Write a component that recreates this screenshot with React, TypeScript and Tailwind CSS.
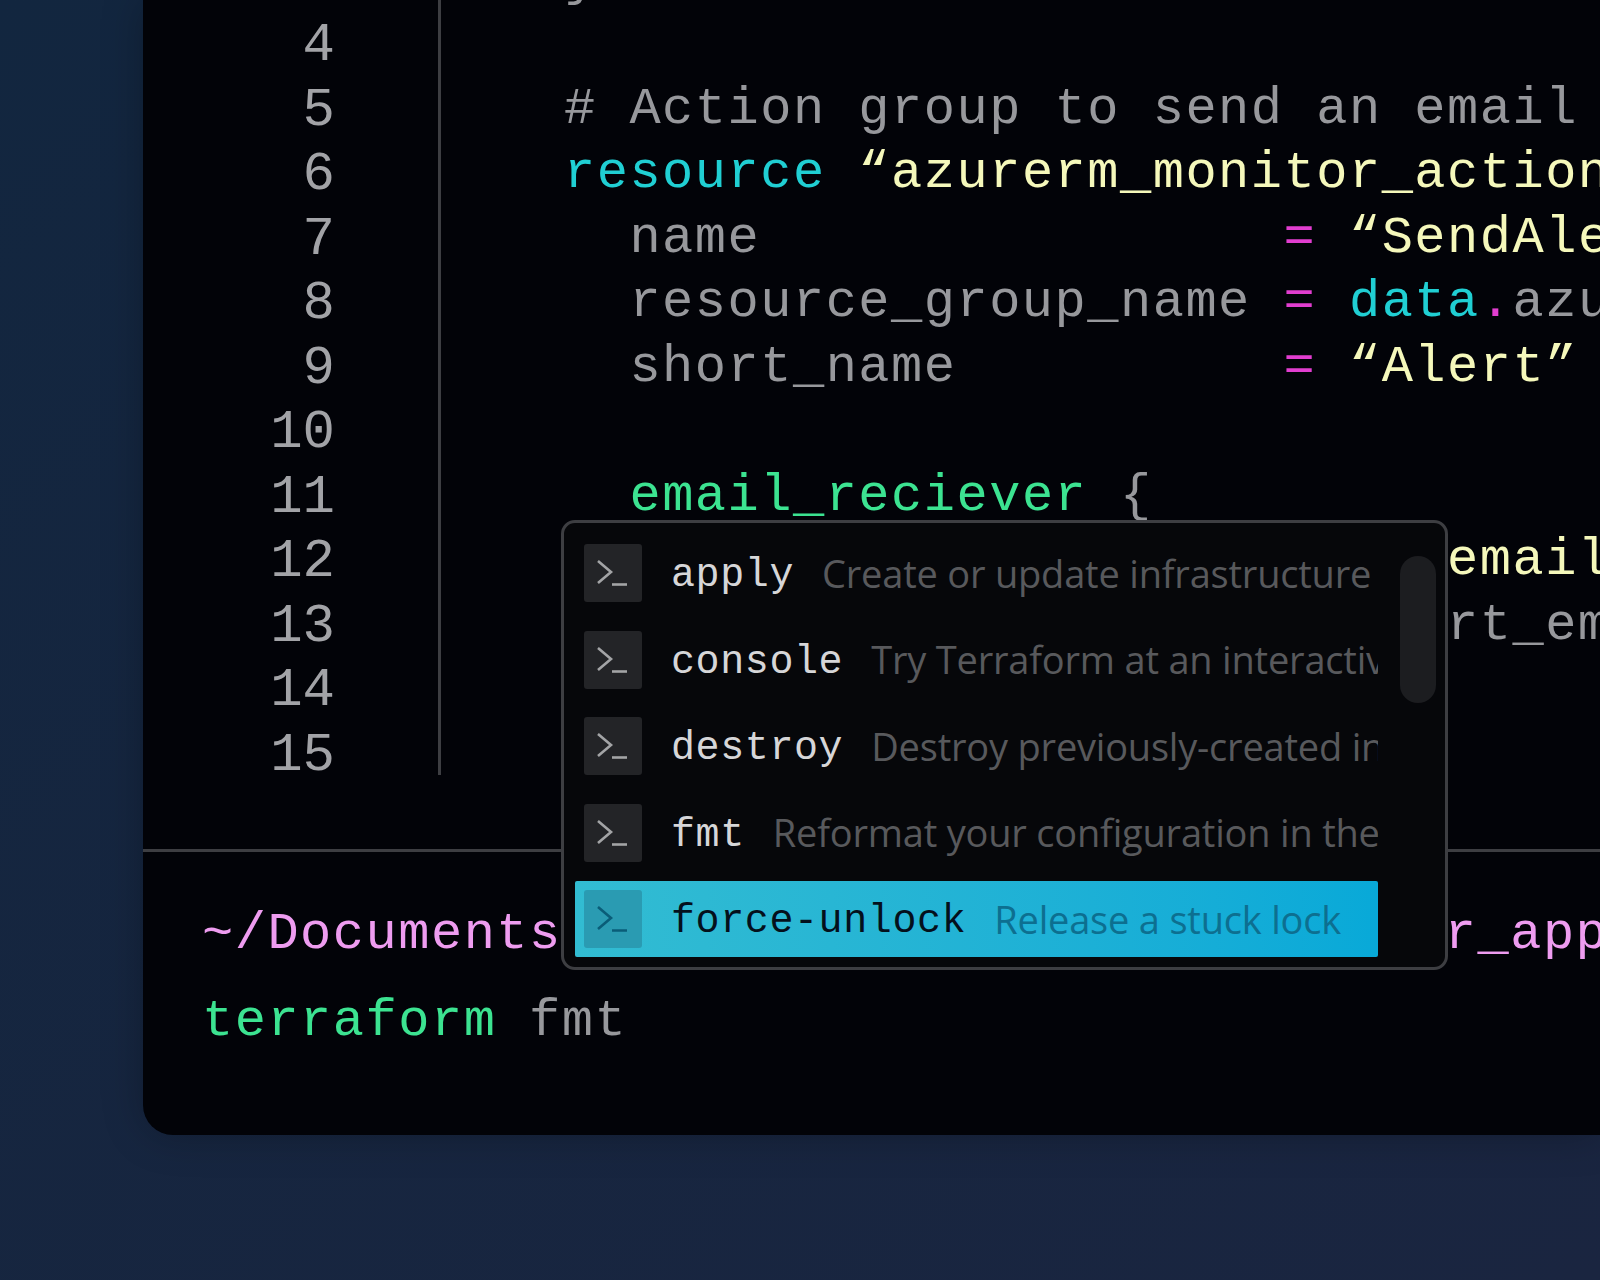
const lineNumbers = [3, 4, 5, 6, 7, 8, 9, 10, 11, 12, 13, 14, 15]

const commands = [
  { name: "apply", desc: "Create or update infrastructure" },
  { name: "console", desc: "Try Terraform at an interactive console" },
  { name: "destroy", desc: "Destroy previously-created infrastructure" },
  { name: "fmt", desc: "Reformat your configuration in the standard style" },
  { name: "force-unlock", desc: "Release a stuck lock", active: true },
]

function PromptIcon() {
  return (
    <svg viewBox="0 0 58 58" className="h-[58px] w-[58px]" fill="none" stroke="currentColor">
      <path d="M14 17 L27 28 L14 39" strokeWidth="2.6" />
      <path d="M28 40.5 H43" strokeWidth="2.6" />
    </svg>
  )
}

function CommandRow({ name, desc, active }: { name: string; desc: string; active?: boolean }) {
  return (
    <div
      className={
        active
          ? "flex items-center h-[76px] w-[803px] shrink-0 pl-[9px] overflow-hidden rounded-[2px] bg-gradient-to-r from-[#32bcd2] to-[#08a9d8]"
          : "flex items-center h-[76px] w-[803px] shrink-0 pl-[9px] overflow-hidden"
      }
    >
      <div
        className={
          active
            ? "flex shrink-0 items-center justify-center w-[58px] h-[58px] rounded-[3px] bg-[#2a9bb2] text-[#0a5d78]"
            : "flex shrink-0 items-center justify-center w-[58px] h-[58px] rounded-[3px] bg-[#232427] text-[#a3a4a6]"
        }
      >
        <PromptIcon />
      </div>
      <span
        className={
          active
            ? "ml-[29px] pt-[6px] font-['Liberation_Mono',monospace] text-[40px] tracking-[0.6px] text-[#04101c] whitespace-pre"
            : "ml-[29px] pt-[6px] font-['Liberation_Mono',monospace] text-[40px] tracking-[0.6px] text-[#d6d6d8] whitespace-pre"
        }
      >
        {name}
      </span>
      <span
        className={
          active
            ? "ml-[28px] font-['Open_Sans',sans-serif] text-[38px] tracking-[-0.2px] text-[#0d6f90] whitespace-pre"
            : "ml-[28px] font-['Open_Sans',sans-serif] text-[38px] tracking-[-0.2px] text-[#58595c] whitespace-pre"
        }
      >
        {desc}
      </span>
    </div>
  )
}

export default function App() {
  return (
    <div className="h-[1280px] w-[1600px] overflow-hidden bg-gradient-to-br from-[#12263f] to-[#1a2540] pl-[143px] font-['Liberation_Mono',monospace]">
      <div className="relative h-[1135px] w-[1457px] overflow-hidden rounded-bl-[30px] bg-[#020308] shadow-[0_0_40px_rgba(0,0,0,0.25)]">
        {/* Editor */}
        <div className="flex h-[849px] overflow-hidden">
          <div className="flex h-[775px] w-[298px] shrink-0 flex-col justify-end border-r-[3px] border-[#3d3e42] pr-[103px]">
            <div className="-mb-[13px]">
              {lineNumbers.map((n) => (
                <div key={n} className="h-[64.5px] text-right text-[54px] leading-[64.5px] text-[#a2a3a7]">
                  {n}
                </div>
              ))}
            </div>
          </div>

          <div className="flex flex-1 flex-col justify-end pb-[62px] pl-[123px] text-[52px] leading-[64.5px] tracking-[1.5px] text-[#97989c] whitespace-pre">
            <div className="h-[64.5px] shrink-0">{"}"}</div>
            <div className="h-[64.5px] shrink-0" />
            <div className="h-[64.5px] shrink-0"># Action group to send an email</div>
            <div className="h-[64.5px] shrink-0">
              <span className="text-[#20cfd3]">resource</span> <span className="text-[#f5f8bb]">“azurerm_monitor_action</span>
            </div>
            <div className="h-[64.5px] shrink-0">
              {"  name                "}<span className="text-[#e23ed0]">=</span> <span className="text-[#f5f8bb]">“SendAle</span>
            </div>
            <div className="h-[64.5px] shrink-0">
              {"  resource_group_name "}<span className="text-[#e23ed0]">=</span> <span className="text-[#20cfd3]">data</span>
              <span className="text-[#e23ed0]">.</span>azu
            </div>
            <div className="h-[64.5px] shrink-0">
              {"  short_name          "}<span className="text-[#e23ed0]">=</span> <span className="text-[#f5f8bb]">“Alert”</span>
            </div>
            <div className="h-[64.5px] shrink-0" />
            <div className="h-[64.5px] shrink-0">
              {"  "}<span className="text-[#3ce391]">email_reciever</span> {"{"}
            </div>
            <div className="h-[64.5px] shrink-0">
              {" ".repeat(27)}<span className="text-[#f5f8bb]">email</span>
            </div>
            <div className="h-[64.5px] shrink-0">{" ".repeat(27)}rt_em</div>
            <div className="h-[64.5px] shrink-0" />
            <div className="h-[64.5px] shrink-0" />
          </div>
        </div>

        {/* Terminal */}
        <div className="border-t-[3px] border-[#3d3e42] pl-[59px] pt-[40px] text-[52px] leading-[86.5px] tracking-[1.5px] whitespace-pre">
          <div className="text-[#ee9cf0]">{"~/Documents" + " ".repeat(27) + "r_app"}</div>
          <div className="text-[#97989c]">
            <span className="text-[#3ce391]">terraform</span> fmt
          </div>
        </div>

        {/* Autocomplete popup */}
        <div className="absolute left-[418px] top-[520px] flex h-[450px] w-[887px] flex-col gap-[10.5px] rounded-[14px] border-[3px] border-[#3d3e42] bg-[#06070a] pl-[11px] pt-[12px]">
          {commands.map((c) => (
            <CommandRow key={c.name} name={c.name} desc={c.desc} active={c.active} />
          ))}
          <div className="absolute left-[836px] top-[33px] h-[147px] w-[36px] rounded-full bg-[#1c1d20]" />
        </div>
      </div>
    </div>
  )
}
